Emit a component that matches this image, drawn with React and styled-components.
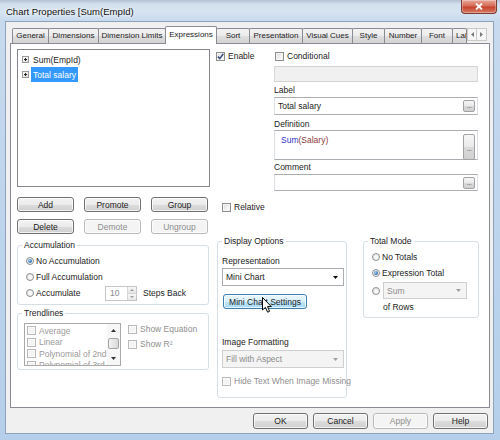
import React from "react";
import styled, { createGlobalStyle } from "styled-components";

const GlobalStyle = createGlobalStyle`
  html, body { margin: 0; padding: 0; }
  body {
    background: #b9d1ea;
    font-family: "Liberation Sans", Arial, sans-serif;
    font-size: 8.5px;
    line-height: 10px;
    color: #1c1c1c;
  }
  *, *::before, *::after { box-sizing: border-box; }
`;

const Window = styled.div`
  width: 500px;
  height: 440px;
  display: flex;
  flex-direction: column;
  overflow: hidden;
  background: linear-gradient(to bottom, #b2c1d1 0, #d2dfed 4px, #d6e3f1 12px, #c7daee 21px, #bbd3ec 60%, #b5cfea 100%);
`;

const TitleBar = styled.div`
  flex: none;
  height: 21px;
  display: flex;
  align-items: flex-start;
  padding: 0 3px 0 6px;
`;

const Title = styled.span`
  margin-top: 6px;
  font-size: 9.5px;
  line-height: 11px;
  color: #111;
  text-shadow: 0 0 5px #fff, 0 0 3px #fff;
`;

const CloseButton = styled.div`
  margin-left: auto;
  width: 36px;
  height: 14px;
  display: flex;
  align-items: center;
  justify-content: center;
  border: 1px solid #7a3c34;
  border-top: none;
  border-radius: 0 0 4px 4px;
  background: linear-gradient(#e8a89a, #d66b56 45%, #c6432c 55%, #d77c66);
  box-shadow: inset 0 0 0 1px rgba(255, 255, 255, 0.3);
`;

const Body = styled.div`
  flex: 1;
  display: flex;
  flex-direction: column;
  margin: 0 6px 6px 5px;
  padding: 4px 3px 4px 4px;
  background: #f0f0f0;
  border: 1px solid #8ea2ba;
`;

const TabStrip = styled.div`
  flex: none;
  height: 17px;
  display: flex;
  align-items: flex-end;
  padding-left: 3px;
`;

const Tab = styled.div`
  flex: none;
  width: ${(p) => p.$w}px;
  height: ${(p) => (p.$active ? 18 : 15)}px;
  margin-left: -1px;
  margin-bottom: ${(p) => (p.$active ? -1 : 0)}px;
  display: flex;
  align-items: center;
  justify-content: ${(p) => (p.$clip ? "flex-start" : "center")};
  padding-left: ${(p) => (p.$clip ? 3 : 0)}px;
  padding-bottom: ${(p) => (p.$active ? 2 : 0)}px;
  border: 1px solid #898c95;
  border-bottom: none;
  border-radius: 2px 2px 0 0;
  background: ${(p) =>
    p.$active ? "#fff" : "linear-gradient(#f3f3f3, #ebebeb 50%, #dedede 51%, #d3d3d3)"};
  position: relative;
  z-index: ${(p) => (p.$active ? 2 : 0)};
  font-size: 8px;
  white-space: nowrap;
  overflow: hidden;
`;

const TabArrows = styled.div`
  flex: none;
  align-self: flex-start;
  margin-top: 2px;
  display: flex;
`;

const TabArrow = styled.div`
  width: 10px;
  height: 13px;
  display: flex;
  align-items: center;
  justify-content: center;
  border: 1px solid #c9c9c9;
  background: #f6f6f6;
  & + & {
    border-left: none;
  }
`;

const Panel = styled.div`
  flex: none;
  height: 365px;
  display: flex;
  flex-direction: column;
  padding: 5px 0 0 6px;
  background: #fff;
  border: 1px solid #898c95;
`;

const TopRow = styled.div`
  flex: none;
  height: 143px;
  display: flex;
  align-items: flex-start;
`;

const TreeList = styled.div`
  flex: none;
  width: 193px;
  height: 138px;
  padding: 2px 0 0 4px;
  border: 1px solid #828790;
  background: #fff;
`;

const TreeItem = styled.div`
  height: 15px;
  display: flex;
  align-items: center;
`;

const TreeText = styled.span`
  margin-left: 2px;
  padding: 0 2px;
  height: 15px;
  display: flex;
  align-items: center;
  background: ${(p) => (p.$selected ? "#3399ff" : "transparent")};
  color: ${(p) => (p.$selected ? "#fff" : "#1c1c1c")};
`;

const EnableCol = styled.div`
  flex: none;
  width: 58px;
  margin-left: 6px;
  padding-top: 2px;
`;

const FieldsCol = styled.div`
  flex: none;
  width: 204px;
  display: flex;
  flex-direction: column;
`;

const CheckRow = styled.div`
  display: flex;
  align-items: center;
  gap: 3px;
  height: ${(p) => p.$h || 10}px;
  margin-top: ${(p) => p.$mt || 0}px;
  margin-left: ${(p) => p.$ml || 0}px;
  color: ${(p) => (p.$disabled ? "#8f8f8f" : "#1c1c1c")};
  white-space: nowrap;
`;

const Box = styled.span`
  flex: none;
  width: 9px;
  height: 9px;
  display: flex;
  align-items: center;
  justify-content: center;
  border: 1px solid ${(p) => (p.$disabled ? "#b9b9b9" : "#8e8f8f")};
  background: ${(p) =>
    p.$disabled ? "#f4f4f4" : "linear-gradient(135deg, #d9d9d9, #f7f7f7 70%, #fff)"};
  box-shadow: inset 0 0 0 1px ${(p) => (p.$disabled ? "#fafafa" : "#f4f4f4")};
`;

const Radio = styled.span`
  flex: none;
  width: 8px;
  height: 8px;
  border-radius: 50%;
  border: 1px solid #8e8f8f;
  background: radial-gradient(circle at 60% 60%, #fff, #dedede);
  display: flex;
  align-items: center;
  justify-content: center;
  &::after {
    content: "";
    display: ${(p) => (p.$checked ? "block" : "none")};
    width: 4px;
    height: 4px;
    border-radius: 50%;
    background: radial-gradient(circle at 35% 35%, #9fd0f5, #1d5fa5 80%);
  }
`;

const FieldLabel = styled.div`
  height: 10px;
  margin-top: ${(p) => p.$mt || 0}px;
  white-space: nowrap;
`;

const Input = styled.div`
  height: ${(p) => p.$h}px;
  margin-top: ${(p) => p.$mt || 0}px;
  display: flex;
  align-items: ${(p) => (p.$tall ? "flex-start" : "center")};
  padding: ${(p) => (p.$tall ? "4px 2px 0 6px" : "0 2px 0 3px")};
  border: 1px solid ${(p) => (p.$disabled ? "#d3d3d3" : "#abadb3")};
  border-left-color: ${(p) => (p.$disabled ? "#d9d9d9" : "#dbdfe6")};
  border-right-color: ${(p) => (p.$disabled ? "#d9d9d9" : "#dbdfe6")};
  background: ${(p) => (p.$disabled ? "#f0f0f0" : "#fff")};
`;

const InputText = styled.span`
  flex: 1;
  white-space: nowrap;
`;

const Ellipsis = styled.span`
  flex: none;
  align-self: center;
  width: 12px;
  height: ${(p) => p.$h || 12}px;
  display: flex;
  align-items: flex-end;
  justify-content: center;
  padding-bottom: ${(p) => (p.$h ? 7 : 2)}px;
  border: 1px solid #a2a2a2;
  border-radius: 2px;
  background: linear-gradient(#f6f6f6, #e9e9e9 50%, #dadada 51%, #d0d0d0);
  font-size: 8px;
  line-height: 6px;
  letter-spacing: -0.5px;
  color: #666;
`;

const FnName = styled.span`
  color: #3333cc;
`;

const FnArg = styled.span`
  color: #8b3b3b;
`;

const MidRow = styled.div`
  flex: none;
  margin-top: 5px;
  display: flex;
  align-items: flex-start;
`;

const ButtonGrid = styled.div`
  flex: none;
  display: grid;
  grid-template-columns: repeat(3, 57px);
  grid-auto-rows: 15px;
  column-gap: 10px;
  row-gap: 7px;
`;

const Button = styled.div`
  flex: none;
  width: ${(p) => (p.$w ? `${p.$w}px` : "auto")};
  height: ${(p) => p.$h || 15}px;
  margin-top: ${(p) => p.$mt || 0}px;
  margin-left: ${(p) => p.$ml || 0}px;
  position: relative;
  display: flex;
  align-items: center;
  justify-content: center;
  white-space: nowrap;
  border-radius: 3px;
  border: 1px solid ${(p) => (p.$disabled ? "#b6babd" : p.$hot ? "#3c7fb1" : "#707070")};
  background: ${(p) =>
    p.$disabled
      ? "#f4f4f4"
      : p.$hot
      ? "linear-gradient(#eaf6fd, #d9f0fc 50%, #bee6fd 51%, #a7d9f5)"
      : "linear-gradient(#f2f2f2, #ebebeb 50%, #dddddd 51%, #cfcfcf)"};
  box-shadow: inset 0 0 0 1px rgba(255, 255, 255, 0.75);
  color: ${(p) => (p.$disabled ? "#8d8d8d" : "#1c1c1c")};
`;

const Cursor = styled.svg`
  position: absolute;
  left: 38px;
  top: 2px;
  overflow: visible;
`;

const BottomRow = styled.div`
  flex: none;
  margin-top: 2px;
  display: flex;
  align-items: flex-start;
`;

const LeftStack = styled.div`
  flex: none;
  width: 192px;
  margin-top: 4px;
  display: flex;
  flex-direction: column;
  gap: 3px;
`;

const Group = styled.fieldset`
  flex: none;
  width: ${(p) => p.$w}px;
  margin: 0 0 0 ${(p) => p.$ml || 0}px;
  padding: 0 0 ${(p) => p.$pb || 0}px 4px;
  min-width: 0;
  border: 1px solid #d5dfe5;
  border-radius: 3px;
`;

const Legend = styled.legend`
  padding: 0 2px;
  height: 10px;
  line-height: 10px;
  font-size: 8.5px;
`;

const RadioRow = styled.div`
  height: ${(p) => p.$h || 16}px;
  margin-top: ${(p) => p.$mt || 0}px;
  padding-left: ${(p) => p.$pl || 4}px;
  display: flex;
  align-items: center;
  gap: ${(p) => p.$gap || 0}px;
  white-space: nowrap;
`;

const RadioText = styled.span`
  margin-left: 2px;
  width: ${(p) => (p.$w ? `${p.$w}px` : "auto")};
`;

const Spinner = styled.div`
  flex: none;
  width: 32px;
  height: 15px;
  display: flex;
  border: 1px solid #c6c6c6;
  background: #fff;
`;

const SpinValue = styled.span`
  flex: 1;
  padding-left: 4px;
  display: flex;
  align-items: center;
  color: #8a8a8a;
`;

const SpinButtons = styled.div`
  width: 9px;
  display: flex;
  flex-direction: column;
  border-left: 1px solid #d6d6d6;
`;

const SpinHalf = styled.div`
  flex: 1;
  display: flex;
  align-items: center;
  justify-content: center;
  background: linear-gradient(#f7f7f7, #e6e6e6);
  & + & {
    border-top: 1px solid #d3d3d3;
  }
`;

const StepsText = styled.span`
  margin-left: 6px;
`;

const TrendBody = styled.div`
  display: flex;
  align-items: flex-start;
  padding-top: 5px;
`;

const ListBox = styled.div`
  flex: none;
  width: 97px;
  height: 43px;
  margin-left: 2px;
  display: flex;
  border: 1px solid #a9a9a9;
  background: #fff;
  overflow: hidden;
`;

const ListItems = styled.div`
  flex: 1;
  min-width: 0;
  overflow: hidden;
  padding: 1px 0 0 2px;
`;

const ListItem = styled.div`
  height: 11.5px;
  display: flex;
  align-items: center;
  gap: 3px;
  color: #9a9a9a;
  white-space: nowrap;
`;

const ScrollBar = styled.div`
  flex: none;
  width: 13px;
  display: flex;
  flex-direction: column;
  background: #f7f7f7;
`;

const ScrollArrow = styled.div`
  height: 13px;
  display: flex;
  align-items: center;
  justify-content: center;
`;

const ScrollTrack = styled.div`
  flex: 1;
  padding: 1px 1px 0;
`;

const ScrollThumb = styled.div`
  height: 11px;
  border: 1px solid #a4a4a4;
  border-radius: 2px;
  background: linear-gradient(to right, #f2f2f2, #dadada);
`;

const TrendOptions = styled.div`
  margin-left: 7px;
  display: flex;
  flex-direction: column;
`;

const Select = styled.div`
  flex: none;
  width: ${(p) => p.$w}px;
  height: ${(p) => p.$h || 18}px;
  margin-top: ${(p) => p.$mt || 0}px;
  display: flex;
  align-items: center;
  padding: 0 5px 0 3px;
  border: 1px solid ${(p) => (p.$disabled ? "#cfcfcf" : "#abadb3")};
  background: ${(p) => (p.$disabled ? "#f4f4f4" : "#fff")};
  color: ${(p) => (p.$disabled ? "#8d8d8d" : "#1c1c1c")};
  white-space: nowrap;
`;

const SelectText = styled.span`
  flex: 1;
`;

const Footer = styled.div`
  flex: none;
  margin-top: 5px;
  padding-right: 2px;
  display: flex;
  justify-content: flex-end;
  gap: 5px;
`;

const Tri = ({ dir = "down", color = "#000", w = 5, h = 3 }) => {
  const pts = {
    down: `0,0 ${w},0 ${w / 2},${h}`,
    up: `0,${h} ${w},${h} ${w / 2},0`,
    left: `${w},0 ${w},${h} 0,${h / 2}`,
    right: `0,0 0,${h} ${w},${h / 2}`,
  }[dir];
  return (
    <svg width={w} height={h} viewBox={`0 0 ${w} ${h}`}>
      <polygon points={pts} fill={color} />
    </svg>
  );
};

const Check = () => (
  <svg width="7" height="7" viewBox="0 0 7 7">
    <path d="M0.8 3.6 L2.8 5.6 L6.3 0.8" fill="none" stroke="#3a4f87" strokeWidth="1.5" />
  </svg>
);

const Plus = () => (
  <svg width="7" height="7" viewBox="0 0 7 7">
    <defs>
      <linearGradient id="pg" x1="0" y1="0" x2="1" y2="1">
        <stop offset="0" stopColor="#ffffff" />
        <stop offset="1" stopColor="#d6d6d6" />
      </linearGradient>
    </defs>
    <rect x="0.5" y="0.5" width="6" height="6" fill="url(#pg)" stroke="#9a9a9a" />
    <path d="M2 3.5 H5 M3.5 2 V5" stroke="#222" />
  </svg>
);

const CheckBox = ({ label, checked, disabled, ...rest }) => (
  <CheckRow $disabled={disabled} {...rest}>
    <Box $disabled={disabled}>{checked && <Check />}</Box>
    <span>{label}</span>
  </CheckRow>
);

const tabs = [
  ["General", 37],
  ["Dimensions", 51],
  ["Dimension Limits", 68],
  ["Expressions", 52, true],
  ["Sort", 34],
  ["Presentation", 54],
  ["Visual Cues", 51],
  ["Style", 33],
  ["Number", 38],
  ["Font", 32],
];

const trendItems = ["Average", "Linear", "Polynomial of 2nd degree", "Polynomial of 3rd degree"];

function ButtonBar() {
  return (
    <Footer>
      <Button $w={55} $h={16}>OK</Button>
      <Button $w={55} $h={16}>Cancel</Button>
      <Button $w={55} $h={16} $disabled>Apply</Button>
      <Button $w={55} $h={16}>Help</Button>
    </Footer>
  );
}

export default function App() {
  return (
    <>
      <GlobalStyle />
      <Window>
        <TitleBar>
          <Title>Chart Properties [Sum(EmpId)</Title>
          <CloseButton>
            <svg width="8" height="7" viewBox="0 0 8 7">
              <path d="M1 0.5 L7 6.5 M7 0.5 L1 6.5" stroke="#fff" strokeWidth="1.8" />
            </svg>
          </CloseButton>
        </TitleBar>
        <Body>
          <TabStrip>
            {tabs.map(([name, w, active]) => (
              <Tab key={name} $w={w} $active={active}>
                {name}
              </Tab>
            ))}
            <Tab $w={15} $clip>
              Labels
            </Tab>
            <TabArrows>
              <TabArrow>
                <Tri dir="left" color="#7a7a7a" w={3} h={5} />
              </TabArrow>
              <TabArrow>
                <Tri dir="right" color="#7a7a7a" w={3} h={5} />
              </TabArrow>
            </TabArrows>
          </TabStrip>

          <Panel>
            <TopRow>
              <TreeList>
                <TreeItem>
                  <Plus />
                  <TreeText>Sum(EmpId)</TreeText>
                </TreeItem>
                <TreeItem>
                  <Plus />
                  <TreeText $selected>Total salary</TreeText>
                </TreeItem>
              </TreeList>
              <EnableCol>
                <CheckBox label="Enable" checked />
              </EnableCol>
              <FieldsCol>
                <CheckBox label="Conditional" $mt={2} $ml={1} />
                <Input $h={16} $mt={5} $disabled />
                <FieldLabel $mt={3}>Label</FieldLabel>
                <Input $h={18} $mt={2}>
                  <InputText>Total salary</InputText>
                  <Ellipsis>...</Ellipsis>
                </Input>
                <FieldLabel $mt={4}>Definition</FieldLabel>
                <Input $h={30} $mt={1} $tall>
                  <InputText>
                    <FnName>Sum</FnName>
                    <FnArg>(Salary)</FnArg>
                  </InputText>
                  <Ellipsis $h={26}>...</Ellipsis>
                </Input>
                <FieldLabel $mt={2}>Comment</FieldLabel>
                <Input $h={17} $mt={2}>
                  <InputText />
                  <Ellipsis>...</Ellipsis>
                </Input>
              </FieldsCol>
            </TopRow>

            <MidRow>
              <ButtonGrid>
                <Button>Add</Button>
                <Button>Promote</Button>
                <Button>Group</Button>
                <Button>Delete</Button>
                <Button $disabled>Demote</Button>
                <Button $disabled>Ungroup</Button>
              </ButtonGrid>
              <CheckBox label="Relative" $mt={5} $ml={14} />
            </MidRow>

            <BottomRow>
              <LeftStack>
                <Group $w={192} $pb={3}>
                  <Legend>Accumulation</Legend>
                  <RadioRow $mt={3}>
                    <Radio $checked />
                    <RadioText>No Accumulation</RadioText>
                  </RadioRow>
                  <RadioRow>
                    <Radio />
                    <RadioText>Full Accumulation</RadioText>
                  </RadioRow>
                  <RadioRow>
                    <Radio />
                    <RadioText $w={69}>Accumulate</RadioText>
                    <Spinner>
                      <SpinValue>10</SpinValue>
                      <SpinButtons>
                        <SpinHalf>
                          <Tri dir="up" color="#9a9a9a" w={4} h={2} />
                        </SpinHalf>
                        <SpinHalf>
                          <Tri dir="down" color="#9a9a9a" w={4} h={2} />
                        </SpinHalf>
                      </SpinButtons>
                    </Spinner>
                    <StepsText>Steps Back</StepsText>
                  </RadioRow>
                </Group>

                <Group $w={192} $pb={3}>
                  <Legend>Trendlines</Legend>
                  <TrendBody>
                    <ListBox>
                      <ListItems>
                        {trendItems.map((t) => (
                          <ListItem key={t}>
                            <Box $disabled />
                            <span>{t}</span>
                          </ListItem>
                        ))}
                      </ListItems>
                      <ScrollBar>
                        <ScrollArrow>
                          <Tri dir="up" color="#333" w={5} h={3} />
                        </ScrollArrow>
                        <ScrollTrack>
                          <ScrollThumb />
                        </ScrollTrack>
                        <ScrollArrow>
                          <Tri dir="down" color="#333" w={5} h={3} />
                        </ScrollArrow>
                      </ScrollBar>
                    </ListBox>
                    <TrendOptions>
                      <CheckBox label="Show Equation" disabled $mt={1} />
                      <CheckBox label="Show R²" disabled $mt={5} />
                    </TrendOptions>
                  </TrendBody>
                </Group>
              </LeftStack>

              <Group $w={130} $ml={8} $pb={11}>
                <Legend>Display Options</Legend>
                <FieldLabel $mt={10}>Representation</FieldLabel>
                <Select $w={122} $mt={2}>
                  <SelectText>Mini Chart</SelectText>
                  <Tri />
                </Select>
                <Button $w={84} $mt={8} $ml={1} $hot>
                  Mini Chart Settings
                  <Cursor width="11" height="17" viewBox="0 0 11 17">
                    <path
                      d="M0.5 0.5 L0.5 13 L3.4 10.3 L5.6 15.2 L7.6 14.3 L5.5 9.6 L9.3 9.6 Z"
                      fill="#fff"
                      stroke="#000"
                      strokeWidth="1"
                      strokeLinejoin="round"
                    />
                  </Cursor>
                </Button>
                <FieldLabel $mt={28}>Image Formatting</FieldLabel>
                <Select $w={122} $mt={3} $disabled>
                  <SelectText>Fill with Aspect</SelectText>
                  <Tri color="#a0a0a0" />
                </Select>
                <CheckBox label="Hide Text When Image Missing" disabled $mt={8} />
              </Group>

              <Group $w={116} $ml={16} $pb={5}>
                <Legend>Total Mode</Legend>
                <RadioRow $mt={3}>
                  <Radio />
                  <RadioText>No Totals</RadioText>
                </RadioRow>
                <RadioRow>
                  <Radio $checked />
                  <RadioText>Expression Total</RadioText>
                </RadioRow>
                <RadioRow $h={17} $mt={1} $gap={3}>
                  <Radio />
                  <Select $w={84} $h={17} $disabled>
                    <SelectText>Sum</SelectText>
                    <Tri color="#a0a0a0" />
                  </Select>
                </RadioRow>
                <RadioRow $h={10} $mt={3} $pl={15}>
                  of Rows
                </RadioRow>
              </Group>
            </BottomRow>
          </Panel>

          <ButtonBar />
        </Body>
      </Window>
    </>
  );
}
